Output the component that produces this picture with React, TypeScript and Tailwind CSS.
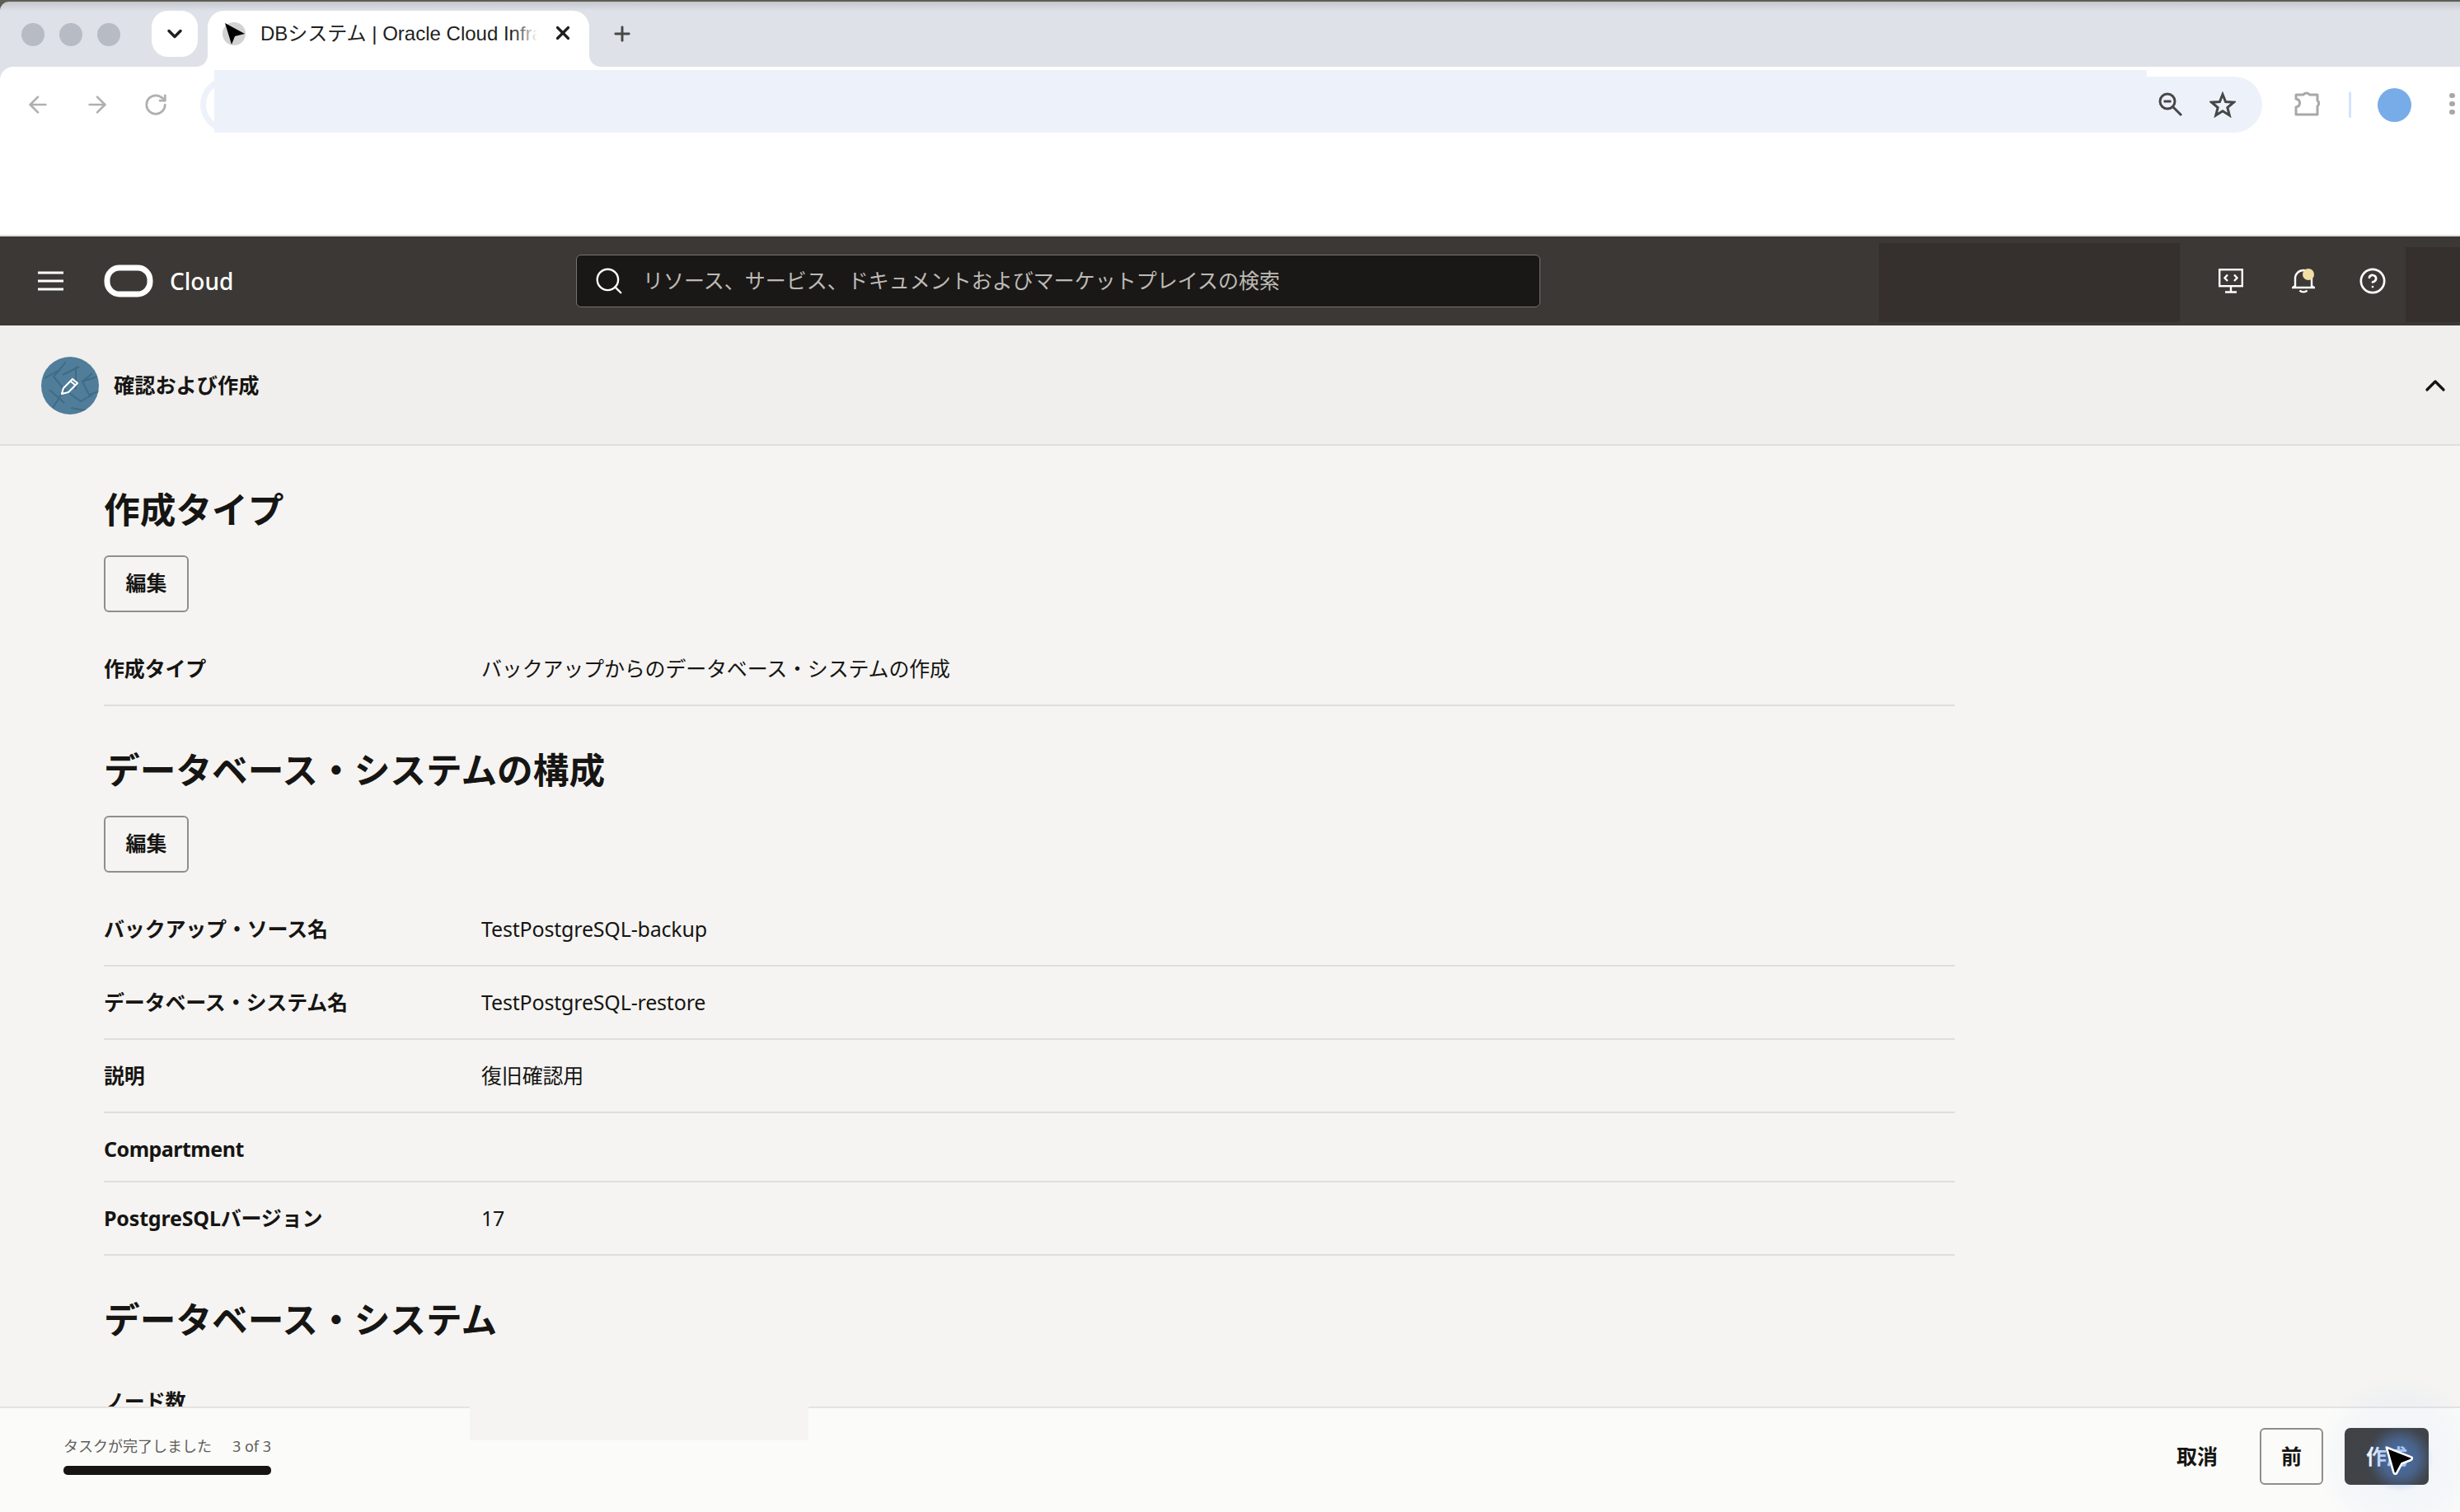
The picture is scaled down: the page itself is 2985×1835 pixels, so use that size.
import React from "react";
import { ArrowLeft, ArrowRight, RotateCw, Search, CircleHelp, ChevronUp, ChevronDown, Plus, X } from "lucide-react";

function EditButton() {
  return (
    <button className="w-[103px] h-[69px] mt-[25px] border-2 border-[#8f8e8c] rounded-[6px] flex items-center justify-center text-[25px] font-bold text-[#161513] pb-[2px]">
      編集
    </button>
  );
}

function Heading({ children }: { children: React.ReactNode }) {
  return <h2 className="h-[60px] flex items-center text-[43.7px] font-bold text-[#161513]">{children}</h2>;
}

function Row({ label, value, short }: { label: string; value?: string; short?: boolean }) {
  return (
    <div className={`flex items-center border-b-2 border-[#dfdedc] text-[25px] tracking-[-0.18px] text-[#161513] ${short ? "h-[84px] pt-[5px]" : "h-[89px]"}`}>
      <div className={`w-[458px] font-bold ${short ? "tracking-[-0.5px]" : ""}`}>{label}</div>
      <div>{value}</div>
    </div>
  );
}

function Dot() {
  return <span className="w-[28px] h-[28px] rounded-full bg-[#b7bcc4]" />;
}

function Corner({ side }: { side: "l" | "r" }) {
  return side === "l" ? (
    <span className="absolute bottom-0 -left-[20px] w-[20px] h-[14px] bg-white">
      <span className="block w-full h-full bg-[#dee1e8] rounded-br-[20px]" />
    </span>
  ) : (
    <span className="absolute bottom-0 -right-[20px] w-[20px] h-[14px] bg-white">
      <span className="block w-full h-full bg-[#dee1e8] rounded-bl-[20px]" />
    </span>
  );
}

export default function App() {
  return (
    <div
      className="w-[2985px] h-[1835px] overflow-hidden flex flex-col bg-[#5d5d52]"
      style={{ fontFamily: '"Noto Sans","Noto Sans CJK JP",sans-serif' }}
    >
      {/* browser chrome */}
      <div className="h-[2px] shrink-0" />
      <div className="h-[11px] shrink-0 bg-linear-to-b from-[#c3c6cc] to-[#dee1e8] rounded-tl-[20px]" />
      <div className="h-[68px] shrink-0 bg-[#dee1e8] flex items-start">
        <div className="flex gap-[18px] ml-[26px] mt-[15px]">
          <Dot />
          <Dot />
          <Dot />
        </div>
        <div className="ml-[38px] w-[56px] h-[56px] rounded-[20px] bg-white flex items-center justify-center">
          <ChevronDown className="w-[28px] h-[28px] text-[#1f1f1f]" strokeWidth={3} />
        </div>
        <div className="relative ml-[12px] w-[463px] h-[68px] bg-white rounded-t-[20px] flex items-start pt-[14px] pl-[18px]">
          <Corner side="l" />
          <Corner side="r" />
          <svg viewBox="0 0 28 28" className="w-[28px] h-[28px] shrink-0">
            <circle cx="14" cy="14" r="14" fill="#d2d2d2" />
            <path d="M3 1 L27 14 L15 17 L11 27 Z" fill="#000" />
          </svg>
          <div
            className="relative ml-[18px] w-[336px] h-[28px] overflow-hidden whitespace-nowrap text-[24px] leading-[28px] text-[#1f1f1f]"
            style={{ fontFamily: '"Liberation Sans","Noto Sans CJK JP",sans-serif' }}
          >
            DBシステム | Oracle Cloud Infrastructure
            <span className="absolute right-0 top-0 w-[30px] h-full bg-linear-to-r from-transparent to-white" />
          </div>
          <X className="ml-[18px] w-[26px] h-[26px] text-[#1f1f1f]" strokeWidth={3} />
        </div>
        <Plus className="ml-[26px] mt-[14px] w-[28px] h-[28px] text-[#474747]" strokeWidth={2.5} />
      </div>

      {/* toolbar */}
      <div className="h-[206px] shrink-0 bg-[#dee1e8]">
        <div className="h-full bg-white rounded-tl-[16px] border-b-2 border-[#dedede] relative">
          <div className="h-[80px] flex items-end">
            <div className="flex items-center h-[68px] w-full">
              <ArrowLeft className="ml-[30px] w-[32px] h-[32px] text-[#b0b0b0]" strokeWidth={2} />
              <ArrowRight className="ml-[40px] w-[32px] h-[32px] text-[#b0b0b0]" strokeWidth={2} />
              <RotateCw className="ml-[40px] w-[30px] h-[30px] text-[#b0b0b0]" strokeWidth={2.2} />
            </div>
          </div>
          {/* address bar */}
          <div className="absolute left-[243px] top-[12px] w-[2502px] h-[68px] rounded-[34px] bg-[#edf2fa] flex items-center justify-end pr-[32px] gap-[32px]">
            <span className="absolute left-[7px] top-[8px] w-[52px] h-[52px] rounded-l-full bg-white" />
            <span className="absolute left-[17px] top-[-8px] w-[2345px] h-[76px] bg-[#edf2fa]" />
            <svg viewBox="0 0 30 30" className="relative w-[30px] h-[30px] -mt-[1px]" fill="none" stroke="#474747" strokeWidth="3">
              <circle cx="11" cy="11" r="9" />
              <path d="M6.5 11 H15.5 M17.5 17.5 L28 28" />
            </svg>
            <svg viewBox="0 0 32 32" className="relative w-[32px] h-[32px]" fill="none" stroke="#474747" strokeWidth="3" strokeLinejoin="miter">
              <path d="M16 3.5 L19.6 12.6 L29.4 13.2 L21.8 19.5 L24.3 29 L16 23.7 L7.7 29 L10.2 19.5 L2.6 13.2 L12.4 12.6 Z" />
            </svg>
          </div>
          <svg viewBox="0 0 34 34" className="absolute left-[2783px] top-[27px] w-[34px] h-[34px]" fill="none" stroke="#a8a8a8" strokeWidth="3" strokeLinejoin="round">
            <path d="M3 7 H12 A4.5 4.5 0 0 1 19.5 7 H29 V14 A4.5 4.5 0 0 1 29 21 V31 H3 V22 C9 21 9 13 3 12 Z" />
          </svg>
          <span className="absolute left-[2850px] top-[30px] w-[3px] h-[32px] rounded bg-[#d3e3fd]" />
          <span className="absolute left-[2885px] top-[26px] w-[41px] h-[41px] rounded-full bg-[#78ace8]" />
          <span className="absolute left-[2972px] top-[32px] flex flex-col gap-[4px]">
            <span className="w-[7px] h-[6px] rounded-full bg-[#a8a8a8]" />
            <span className="w-[7px] h-[6px] rounded-full bg-[#a8a8a8]" />
            <span className="w-[7px] h-[6px] rounded-full bg-[#a8a8a8]" />
          </span>
        </div>
      </div>

      {/* OCI header */}
      <header className="h-[108px] shrink-0 bg-[#3c3835] flex items-center text-white">
        <svg viewBox="0 0 31 24" className="ml-[46px] w-[31px] h-[24px]" stroke="#fff" strokeWidth="3">
          <path d="M0 2 H31 M0 12 H31 M0 22 H31" />
        </svg>
        <svg viewBox="0 0 60 40" className="ml-[49px] w-[60px] h-[40px]">
          <rect x="4" y="4" width="52" height="32" rx="15" fill="none" stroke="#fff" strokeWidth="7" />
        </svg>
        <span className="ml-[20px] w-[80px] text-[28px] font-medium">Cloud</span>
        <div className="ml-[413px] w-[1170px] h-[64px] rounded-[6px] bg-[#1a1816] border border-[#77736f] flex items-center">
          <Search className="ml-[20px] w-[38px] h-[38px] text-white" strokeWidth={1.5} />
          <span className="ml-[22px] text-[25px] text-[#bdbab6]">リソース、サービス、ドキュメントおよびマーケットプレイスの検索</span>
        </div>
        <div className="ml-[411px] w-[365px] h-[96px] self-end mb-[4px] bg-[#35302d]" />
        <svg viewBox="0 0 30 30" className="ml-[47px] w-[30px] h-[30px]" fill="none" stroke="#fff" strokeWidth="2.4">
          <rect x="1.2" y="1.2" width="27.6" height="20" />
          <path d="M11 7.5 L7.5 11.2 L11 15 M19 7.5 L22.5 11.2 L19 15 M15 21 V28.5 M8 28.5 H22" />
        </svg>
        <svg viewBox="0 0 28 30" className="ml-[59px] w-[28px] h-[30px]" fill="none" stroke="#fff" strokeWidth="2.4">
          <path d="M4 21 V12 A10 10 0 0 1 24 12 V21 L27 23 H1 Z" />
          <path d="M9.5 26.5 C11.5 29 16.5 29 18.5 26.5" />
          <circle cx="20" cy="7" r="7" fill="#f2dea4" stroke="none" />
        </svg>
        <CircleHelp className="ml-[53px] w-[34px] h-[34px]" strokeWidth={1.9} />
        <div className="ml-[23px] w-[66px] h-[91px] self-end mb-[4px] bg-[#35302d]" />
      </header>

      {/* step header */}
      <div className="h-[146px] shrink-0 bg-[#f0efed] border-b-2 border-[#e0dfdd] flex items-start pt-[38px] pl-[50px] pr-[10px]">
        <div className="relative w-[70px] h-[70px] rounded-full bg-[#507d99] overflow-hidden">
          <svg viewBox="0 0 70 70" className="absolute inset-0 w-full h-full" fill="none" stroke="#406b85" strokeWidth="2">
            <path d="M4 26 L22 16 L30 6 M22 16 L15 24 L28 40 L14 62 M42 12 L42 40 M46 12 L26 22 M62 20 L50 30 L58 46 L70 42 M50 30 L68 24 M28 40 L48 54 L62 46 M10 40 L28 56 M36 62 L58 66" />
          </svg>
          <svg viewBox="0 0 70 70" className="absolute inset-0 w-full h-full" fill="none" stroke="#fff" strokeWidth="2.2" strokeLinejoin="round">
            <path d="M25 45 L27 38 L38 27 L44 32 L33 43 Z" />
            <path d="M35.5 29.5 L41.5 34.5" />
          </svg>
        </div>
        <span className="ml-[18px] h-[70px] flex items-center text-[25.2px] font-bold text-[#161513]">確認および作成</span>
        <ChevronUp className="ml-auto mt-[15px] w-[40px] h-[40px] text-[#161513]" strokeWidth={2} />
      </div>

      {/* main */}
      <main className="flex-1 min-h-0 overflow-hidden bg-[#f5f4f2]">
        <div className="w-[2246px] ml-[126px] pt-[48px]">
          <Heading>作成タイプ</Heading>
          <EditButton />
          <div className="mt-[25px]">
            <Row label="作成タイプ" value="バックアップからのデータベース・システムの作成" />
          </div>
          <div className="mt-[48px]">
            <Heading>データベース・システムの構成</Heading>
          </div>
          <EditButton />
          <div className="mt-[25px]">
            <Row label="バックアップ・ソース名" value="TestPostgreSQL-backup" />
            <Row label="データベース・システム名" value="TestPostgreSQL-restore" />
            <Row label="説明" value="復旧確認用" />
            <Row label="Compartment" short />
            <Row label="PostgreSQLバージョン" value="17" />
          </div>
          <div className="mt-[48px]">
            <Heading>データベース・システム</Heading>
          </div>
          <div className="mt-[25px]">
            <Row label="ノード数" />
          </div>
        </div>
      </main>

      {/* footer */}
      <footer className="relative h-[128px] shrink-0 bg-[#fbfbf9] border-t-2 border-[#e4e3e1] flex items-start justify-between pl-[77px] pr-[38px]">
        <span className="absolute left-[570px] -top-[2px] w-[411px] h-[41px] bg-[#f5f4f2]" />
        <div className="w-[252px] pt-[34px]">
          <div className="flex justify-between text-[18px] leading-[24px] text-[#5e5d5b]">
            <span>タスクが完了しました</span>
            <span>3 of 3</span>
          </div>
          <div className="mt-[12px] h-[11px] rounded-[5px] bg-[#161513]" />
        </div>
        <div className="flex items-center gap-[26px] pt-[24px]">
          <button className="w-[100px] h-[69px] text-[25px] font-bold text-[#161513]">取消</button>
          <button className="w-[77px] h-[69px] border-2 border-[#8f8e8c] rounded-[6px] text-[25px] font-bold text-[#161513]">前</button>
          <button className="w-[102px] h-[69px] rounded-[7px] bg-[#3f3f3f] text-[25px] font-bold text-white">作成</button>
        </div>
        <span className="absolute left-[2812px] top-[-39px] w-[200px] h-[200px] rounded-full bg-[radial-gradient(circle,rgba(84,144,235,0.06)_0%,rgba(84,144,235,0.04)_50%,rgba(84,144,235,0)_72%)]" />
        <span className="absolute left-[2872px] top-[21px] w-[80px] h-[80px] rounded-full bg-[radial-gradient(circle,rgba(84,144,235,0.6)_0%,rgba(84,144,235,0.4)_40%,rgba(84,144,235,0.1)_62%,rgba(84,144,235,0)_72%)]" />
        <svg viewBox="0 0 42 40" className="absolute left-[2887px] top-[42px] w-[46px] h-[44px]">
          <path d="M8 5 L36 16 Q37 18 35 19 L25 23 L19 34 Q17 35 16 33 Z" fill="#000" stroke="#fff" strokeWidth="2.4" strokeLinejoin="round" />
        </svg>
      </footer>
    </div>
  );
}
